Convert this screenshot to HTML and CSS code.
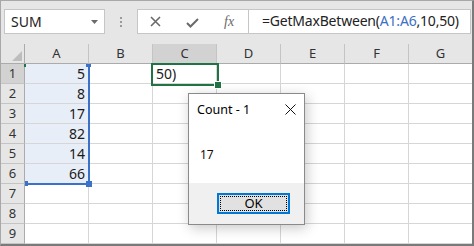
FILE: index.html
```html
<!DOCTYPE html>
<html>
<head>
<meta charset="utf-8">
<link rel="stylesheet" href="styles.css">
</head>
<body>
<div class="frame">
  <div class="fbar">
    <div class="namebox">
      <span class="name">SUM</span>
      <svg class="arrow" width="7" height="4" viewBox="0 0 7 4"><path d="M0 0H7L3.5 4Z" fill="#6b6b6b"/></svg>
    </div>
    <div class="dots"><i></i><i></i><i></i></div>
    <div class="icons">
      <svg class="ic-x" width="11" height="11" viewBox="0 0 11 11"><path d="M1 1L10 10M10 1L1 10" stroke="#6a6a6a" stroke-width="1.6" fill="none"/></svg>
      <svg class="ic-ok" width="13" height="10" viewBox="0 0 13 10"><path d="M1 5L4.5 8.5L12 1" stroke="#6a6a6a" stroke-width="2" fill="none"/></svg>
      <span class="fx">fx</span>
    </div>
    <div class="formula">=GetMaxBetween(<span class="ref">A1:A6</span>,10,50)</div>
  </div>
  <div class="grid">
    <div class="corner"><svg width="10" height="10" viewBox="0 0 10 10"><path d="M10 0V10H0Z" fill="#bdbdbd"/></svg></div>
    <div class="ch">A</div><div class="ch">B</div><div class="ch cur">C</div><div class="ch">D</div><div class="ch">E</div><div class="ch">F</div><div class="ch">G</div>

    <div class="rh cur">1</div><div class="c sel num">5</div><div class="c"></div><div class="c txt">50)</div><div class="c"></div><div class="c"></div><div class="c"></div><div class="c"></div>
    <div class="rh">2</div><div class="c sel num">8</div><div class="c"></div><div class="c"></div><div class="c"></div><div class="c"></div><div class="c"></div><div class="c"></div>
    <div class="rh">3</div><div class="c sel num">17</div><div class="c"></div><div class="c"></div><div class="c"></div><div class="c"></div><div class="c"></div><div class="c"></div>
    <div class="rh">4</div><div class="c sel num">82</div><div class="c"></div><div class="c"></div><div class="c"></div><div class="c"></div><div class="c"></div><div class="c"></div>
    <div class="rh">5</div><div class="c sel num">14</div><div class="c"></div><div class="c"></div><div class="c"></div><div class="c"></div><div class="c"></div><div class="c"></div>
    <div class="rh">6</div><div class="c sel num">66</div><div class="c"></div><div class="c"></div><div class="c"></div><div class="c"></div><div class="c"></div><div class="c"></div>
    <div class="rh">7</div><div class="c"></div><div class="c"></div><div class="c"></div><div class="c"></div><div class="c"></div><div class="c"></div><div class="c"></div>
    <div class="rh">8</div><div class="c"></div><div class="c"></div><div class="c"></div><div class="c"></div><div class="c"></div><div class="c"></div><div class="c"></div>
    <div class="rh">9</div><div class="c"></div><div class="c"></div><div class="c"></div><div class="c"></div><div class="c"></div><div class="c"></div><div class="c"></div>
  </div>

  <div class="range">
    <i class="h h-tl"></i><i class="h h-tr"></i><i class="h h-bl"></i><i class="h h-br"></i>
  </div>
  <div class="active"><i class="fill"></i></div>

  <div class="dialog">
    <div class="dtitle">
      <span>Count - 1</span>
      <svg class="close" width="11" height="11" viewBox="0 0 11 11"><path d="M0.5 0.5L10.5 10.5M10.5 0.5L0.5 10.5" stroke="#111" stroke-width="1" fill="none"/></svg>
    </div>
    <div class="dbody">17</div>
    <div class="dfoot">
      <div class="okbtn"><div class="focus">OK</div></div>
    </div>
  </div>
</div>
</body>
</html>
```

FILE: styles.css
```css
* { box-sizing: border-box; }
html, body { margin: 0; padding: 0; background: #fff; }
body { font-family: "Segoe UI", "Noto Sans", "Open Sans", sans-serif; color: #222; }

.frame {
  position: relative;
  width: 474px;
  height: 246px;
  border-top: 1px solid #a8a8a8;
  border-left: 1px solid #a8a8a8;
  border-right: 2px solid #7a7a7a;
  border-bottom: 2px solid #7a7a7a;
  overflow: hidden;
  background: #fff;
}

.fbar {
  height: 43px;
  background: #e6e6e6;
  display: flex;
  align-items: flex-start;
  padding-top: 8px;
}
.namebox {
  margin-left: 3px;
  width: 101px;
  height: 25px;
  background: #fff;
  border: 1px solid #c6c6c6;
  display: flex;
  align-items: center;
  justify-content: space-between;
  padding: 0 6px 0 6px;
}
.name { font-size: 14px; color: #222; letter-spacing: 0.1px; }
.arrow { margin-top: 1px; }

.dots {
  width: 32px;
  height: 25px;
  display: flex;
  flex-direction: column;
  align-items: center;
  justify-content: center;
  gap: 2px;
}
.dots i { display: block; width: 2px; height: 2px; background: #9a9a9a; }

.icons {
  width: 112px;
  height: 25px;
  background: #fff;
  border: 1px solid #c6c6c6;
  display: flex;
  align-items: center;
  padding-left: 12px;
}
.ic-x { margin-right: 25px; }
.ic-ok { margin-right: 25px; margin-top: 2px; }
.fx { font-family: "Liberation Serif", "DejaVu Serif", serif; font-style: italic; font-size: 14px; color: #6a6a6a; }

.formula {
  flex: 1;
  margin-right: 1px;
  height: 25px;
  background: #fff;
  border: 1px solid #c6c6c6;
  border-left: 0;
  padding-left: 13px;
  font-size: 14px;
  letter-spacing: -0.2px;
  line-height: 22px;
  color: #222;
  white-space: nowrap;
}
.ref { color: #3c6fc4; }

.grid {
  display: grid;
  grid-template-columns: 24px repeat(7, 64px);
  grid-auto-rows: 20px;
  font-size: 13px;
}
.grid > div {
  border-right: 1px solid #d6d6d6;
  border-bottom: 1px solid #d6d6d6;
}
.corner {
  background: #e6e6e6;
  border-right-color: #ababab !important;
  border-bottom-color: #ababab !important;
  display: flex;
  align-items: flex-end;
  justify-content: flex-end;
  padding: 0 2px 2px 0;
}
.corner svg { display: block; }
.ch {
  background: #e6e6e6;
  border-right-color: #c4c4c4 !important;
  border-bottom-color: #ababab !important;
  text-align: center;
  line-height: 19px;
  color: #333;
}
.rh {
  background: #e6e6e6;
  border-right-color: #ababab !important;
  border-bottom-color: #c4c4c4 !important;
  text-align: center;
  line-height: 19px;
  color: #333;
}
.ch.cur, .rh.cur { background: #d2d2d2; }
.c { font-size: 14px; line-height: 19px; color: #1a1a1a; }
.sel { background: #e8eef8; }
.num { text-align: right; padding-right: 3px; }
.txt { padding-left: 3px; }

.range {
  position: absolute;
  left: 24px;
  top: 63px;
  width: 65px;
  height: 121px;
  border-right: 2px solid #3a72c9;
  border-bottom: 2px solid #3a72c9;
}
.h { position: absolute; display: block; background: #3a72c9; }
.h-tl { left: -1px; top: 0; width: 2px; height: 3px; background: #217346; }
.h-tr { right: -3px; top: 0; width: 5px; height: 3px; }
.h-bl { left: 0; bottom: -3px; width: 3px; height: 5px; }
.h-br { right: -4px; bottom: -4px; width: 6px; height: 6px; }

.active {
  position: absolute;
  left: 150px;
  top: 62px;
  width: 68px;
  height: 23px;
  border: 2px solid #217346;
}
.fill {
  position: absolute;
  right: -4px;
  bottom: -4px;
  width: 6px;
  height: 6px;
  background: #217346;
  border: 1px solid #fff;
  box-sizing: content-box;
  margin: -1px;
}

.dialog {
  position: absolute;
  left: 187px;
  top: 92px;
  width: 117px;
  height: 132px;
  border: 1px solid #8a8a8a;
  background: #fff;
  box-shadow: 2px 3px 12px rgba(0,0,0,0.22);
  display: flex;
  flex-direction: column;
}
.dtitle {
  height: 30px;
  display: flex;
  align-items: center;
  justify-content: space-between;
  padding: 0 8px 0 8px;
  font-size: 12.5px;
  color: #000;
}
.close { margin-top: 0; }
.dbody {
  height: 59px;
  padding-left: 11px;
  padding-top: 22px;
  font-size: 12px;
  color: #1a0a0a;
}
.dfoot {
  flex: 1;
  background: #f0f0f0;
  padding-top: 10px;
  padding-left: 28px;
}
.okbtn {
  width: 73px;
  height: 21px;
  border: 2px solid #0078d7;
  background: #e1e1e1;
  padding: 1px;
}
.focus {
  height: 100%;
  border: 1px dotted #000;
  text-align: center;
  font-size: 13px;
  line-height: 13px;
  color: #000;
}
```
